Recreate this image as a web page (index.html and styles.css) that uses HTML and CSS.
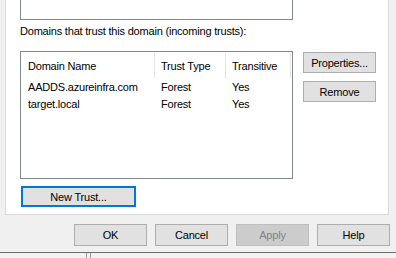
FILE: index.html
```html
<!DOCTYPE html>
<html lang="en">
<head>
  <meta charset="UTF-8">
  <title>Trusts</title>
  <link rel="stylesheet" href="styles.css">
</head>
<body>

<div class="dialog">
  <div class="tab-page">
    <div class="list-top"></div>
    <div class="label">Domains that trust this domain (incoming trusts):</div>

    <div class="list-row">
      <div class="listview">
        <div class="lv-header">
          <div class="col c1">Domain Name</div>
          <div class="col c2">Trust Type</div>
          <div class="col c3">Transitive</div>
        </div>
        <div class="lv-item">
          <div class="col c1">AADDS.azureinfra.com</div>
          <div class="col c2">Forest</div>
          <div class="col c3">Yes</div>
        </div>
        <div class="lv-item">
          <div class="col c1">target.local</div>
          <div class="col c2">Forest</div>
          <div class="col c3">Yes</div>
        </div>
      </div>
      <div class="side-buttons">
        <button class="btn side">Properties...</button>
        <button class="btn side">Remove</button>
      </div>
    </div>

    <button class="btn new-trust">New Trust...</button>
  </div>

  <div class="footer">
    <button class="btn">OK</button>
    <button class="btn">Cancel</button>
    <button class="btn" disabled>Apply</button>
    <button class="btn">Help</button>
  </div>
</div>

<div class="behind">
  <span class="mark"></span>
</div>

</body>
</html>
```

FILE: styles.css
```css
body {
  margin: 0;
  width: 396px;
  height: 258px;
  overflow: hidden;
  background: #f0f0f0;
  font-family: "Liberation Sans", Arial, sans-serif;
  font-size: 11px;
  color: #000;
}

.dialog {
  height: 252px;
  border-bottom: 1px solid #6d6d6d;
  display: flex;
  flex-direction: column;
}

.tab-page {
  margin-left: 5px;
  width: 384px;
  height: 215px;
  box-sizing: border-box;
  background: #fff;
  border: 1px solid #d9d9d9;
  border-top: none;
  padding-left: 14px;
}

.list-top {
  width: 273px;
  height: 20px;
  box-sizing: border-box;
  border: 1px solid #828790;
  border-top: none;
}

.label {
  height: 16px;
  line-height: 16px;
  padding-top: 3px;
  margin-bottom: 12px;
  letter-spacing: -0.2px;
}

.list-row {
  display: flex;
  gap: 10px;
}

.listview {
  width: 273px;
  height: 128px;
  box-sizing: border-box;
  border: 1px solid #828790;
}

.lv-header {
  display: flex;
  height: 25px;
  align-items: stretch;
  margin-top: 1px;
  margin-bottom: 1px;
}

.lv-header .col {
  display: flex;
  align-items: center;
  border-right: 1px solid #e5e5e5;
}

.lv-item {
  display: flex;
  height: 17px;
  line-height: 17px;
}

.col {
  box-sizing: border-box;
  padding-left: 7px;
  white-space: nowrap;
  letter-spacing: -0.2px;
}

.c1 { width: 134px; }
.c2 { width: 71px; padding-left: 6px; }
.c3 { width: 65px; padding-left: 6px; }

.side-buttons {
  display: flex;
  flex-direction: column;
  gap: 8px;
  padding-top: 1px;
}

.btn {
  font-family: "Liberation Sans", Arial, sans-serif;
  font-size: 11px;
  color: #000;
  background: #e1e1e1;
  border: 1px solid #adadad;
  width: 73px;
  height: 21px;
  padding: 0;
  margin: 0;
  letter-spacing: -0.2px;
}

.btn:disabled {
  background: #cccccc;
  border-color: #bfbfbf;
  color: #838383;
}

.new-trust {
  display: block;
  margin-top: 7px;
  margin-left: 1px;
  width: 115px;
  height: 21px;
  border: 2px solid #0078d7;
}

.footer {
  display: flex;
  gap: 8px;
  padding-left: 74px;
  padding-top: 9px;
}

.footer .btn {
  height: 22px;
}

.behind {
  height: 5px;
  background: #f3f3f3;
  padding-left: 86px;
}

.mark {
  display: block;
  width: 3px;
  height: 5px;
  border-left: 1px solid #9a9a9a;
  border-right: 1px solid #9a9a9a;
}
```
